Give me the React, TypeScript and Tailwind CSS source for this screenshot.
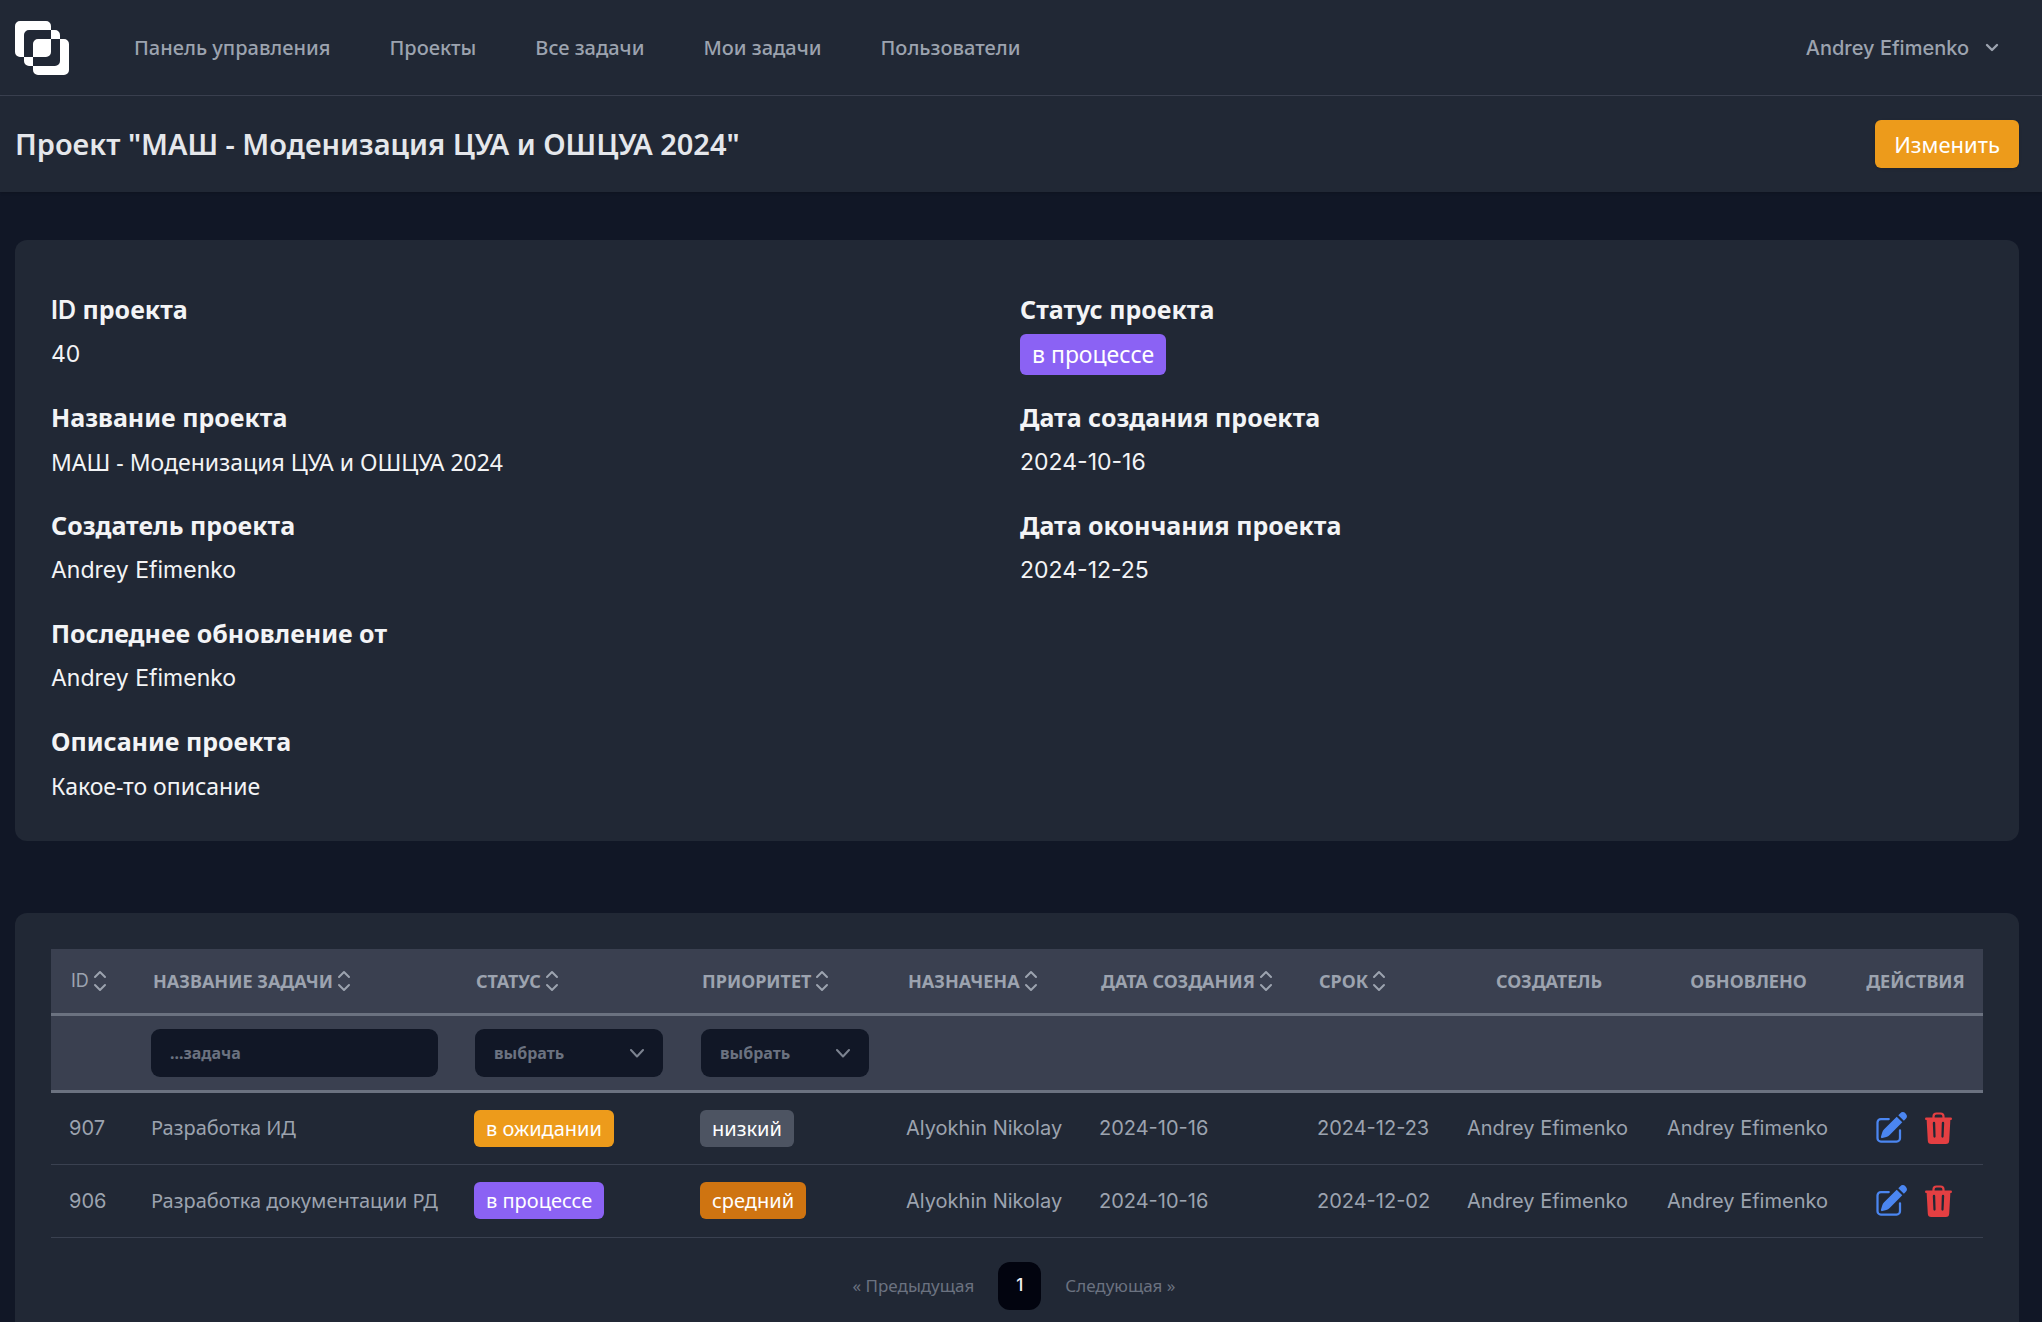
import { HiPencilSquare } from "react-icons/hi2";

const navItems = ["Панель управления", "Проекты", "Все задачи", "Мои задачи", "Пользователи"];

const leftFields = [
  { label: <><span className="font-['Inter'] font-semibold leading-none">ID</span> проекта</>, value: "40", latin: true },
  { label: "Название проекта", value: "МАШ - Моденизация ЦУА и ОШЦУА 2024", latin: false },
  { label: "Создатель проекта", value: "Andrey Efimenko", latin: true },
  { label: "Последнее обновление от", value: "Andrey Efimenko", latin: true },
  { label: "Описание проекта", value: "Какое-то описание", latin: false },
];

const sortable = ["Название задачи", "Статус", "Приоритет", "Назначена", "Дата создания", "Срок"];
const plain = ["Создатель", "Обновлено", "Действия"];

const tasks = [
  {
    id: 907,
    name: "Разработка ИД",
    status: "в ожидании",
    statusColor: "bg-[#ed9b1b]",
    priority: "низкий",
    priorityColor: "bg-[#4d5462]",
    due: "2024-12-23",
  },
  {
    id: 906,
    name: "Разработка документации РД",
    status: "в процессе",
    statusColor: "bg-[#8b62f4]",
    priority: "средний",
    priorityColor: "bg-[#cf7411]",
    due: "2024-12-02",
  },
];

function Logo() {
  return (
    <svg viewBox="0 0 54 54" className="size-[54px]" aria-hidden="true">
      <path
        fill="#fff"
        fillRule="evenodd"
        d="M5 0H31a5 5 0 0 1 5 5V31a5 5 0 0 1-5 5H5a5 5 0 0 1-5-5V5a5 5 0 0 1 5-5Z M14 9H40a5 5 0 0 1 5 5V40a5 5 0 0 1-5 5H14a5 5 0 0 1-5-5V14a5 5 0 0 1 5-5Z M23 18H49a5 5 0 0 1 5 5V49a5 5 0 0 1-5 5H23a5 5 0 0 1-5-5V23a5 5 0 0 1 5-5Z"
      />
    </svg>
  );
}

function SortIcon() {
  return (
    <svg
      viewBox="0 0 14 22"
      className="h-[22px] w-[14px] shrink-0"
      fill="none"
      stroke="currentColor"
      strokeWidth="2"
      strokeLinecap="round"
      strokeLinejoin="round"
      aria-hidden="true"
    >
      <path d="M2 7l5-5 5 5M2 15l5 5 5-5" />
    </svg>
  );
}

function TrashIcon() {
  return (
    <svg viewBox="0 0 27 32" className="h-8 w-[27px]" aria-hidden="true">
      <path d="M8.5 6V4.5a3 3 0 0 1 3-3h4a3 3 0 0 1 3 3V6" fill="none" stroke="currentColor" strokeWidth="2.2" />
      <rect y="5.4" width="27" height="2.6" rx="1.3" fill="currentColor" />
      <path
        fill="currentColor"
        fillRule="evenodd"
        d="M1.6 7H25.4L24.2 28.8A3.4 3.4 0 0 1 20.8 32H6.2A3.4 3.4 0 0 1 2.8 28.8ZM7.8 11L8.4 24.6A1.1 1.1 0 0 0 10.6 24.6L10.2 11A1.2 1.2 0 0 0 7.8 11ZM16.8 11L16.4 24.6A1.1 1.1 0 0 0 18.6 24.6L19.2 11A1.2 1.2 0 0 0 16.8 11Z"
      />
    </svg>
  );
}

function FilterSelect({ label }: { label: string }) {
  return (
    <div className="relative">
      <select
        aria-label={label}
        className="block h-12 w-full appearance-none rounded-[9px] bg-[#111726] pl-[19px] pr-10 text-base font-bold text-[#6b7280]"
      >
        <option>выбрать</option>
      </select>
      <svg
        viewBox="0 0 14 9"
        className="pointer-events-none absolute right-[19px] top-5 h-[9px] w-[14px] text-[#7c8390]"
        fill="none"
        stroke="currentColor"
        strokeWidth="2"
        strokeLinecap="round"
        strokeLinejoin="round"
        aria-hidden="true"
      >
        <path d="M1 1l6 6.5L13 1" />
      </svg>
    </div>
  );
}

export default function App() {
  return (
    <div className="min-h-screen bg-[#111726] font-['Noto_Sans',sans-serif] text-[#f3f4f6]">
      <nav className="flex h-24 items-center border-b border-[#3a4150] bg-[#212835] pl-[15px] pr-[43px]">
        <a href="#" aria-label="Главная">
          <Logo />
        </a>
        <div className="ml-[65px] flex flex-1 gap-[59px] text-xl font-medium text-[#9ca3af]">
          {navItems.map((item) => (
            <a key={item} href="#">
              {item}
            </a>
          ))}
        </div>
        <button className="flex items-center gap-4 font-['Inter'] text-xl font-medium text-[#9ca3af]">
          Andrey Efimenko
          <svg
            viewBox="0 0 14 10"
            className="h-[10px] w-[14px]"
            fill="none"
            stroke="currentColor"
            strokeWidth="2.4"
            strokeLinecap="round"
            strokeLinejoin="round"
            aria-hidden="true"
          >
            <path d="M2 2l5 5 5-5" />
          </svg>
        </button>
      </nav>

      <header className="flex h-24 items-center justify-between bg-[#212835] pl-[15px] pr-[23px] shadow">
        <h1 className="text-[29px] font-semibold text-[#e5e7eb]">Проект "МАШ - Моденизация ЦУА и ОШЦУА 2024"</h1>
        <button className="h-12 rounded-md bg-[#ed9b1b] px-[19px] text-[22px] text-white shadow">Изменить</button>
      </header>

      <main className="pl-[15px] pr-[23px] pt-12">
        <section className="grid grid-cols-2 gap-[6px] rounded-xl bg-[#212835] px-9 pb-[37px] pt-12">
          <dl className="flex flex-col gap-6">
            {leftFields.map((field, i) => (
              <div key={i}>
                <dt className="text-[25px] font-bold leading-[42px]">{field.label}</dt>
                <dd
                  className={
                    field.latin
                      ? "mt-[6px] font-['Inter'] text-[23px] leading-9"
                      : "mt-[6px] text-[23px] leading-9"
                  }
                >
                  {field.value}
                </dd>
              </div>
            ))}
          </dl>
          <dl className="flex flex-col gap-6">
            <div>
              <dt className="text-[25px] font-bold leading-[42px]">Статус проекта</dt>
              <dd className="mt-[6px] flex h-9 items-center">
                <span className="rounded-md bg-[#8b62f4] px-3 text-[23px] leading-[41px] text-white">в процессе</span>
              </dd>
            </div>
            <div>
              <dt className="text-[25px] font-bold leading-[42px]">Дата создания проекта</dt>
              <dd className="mt-[6px] font-['Inter'] text-[23px] leading-9">2024-10-16</dd>
            </div>
            <div>
              <dt className="text-[25px] font-bold leading-[42px]">Дата окончания проекта</dt>
              <dd className="mt-[6px] font-['Inter'] text-[23px] leading-9">2024-12-25</dd>
            </div>
          </dl>
        </section>

        <section className="mt-[72px] rounded-t-xl bg-[#212835] px-9 pb-9 pt-9">
          <table className="w-full table-fixed text-left text-xl text-[#9ca3af]">
            <colgroup>
              <col className="w-[82px]" />
              <col className="w-[323px]" />
              <col className="w-[226px]" />
              <col className="w-[206px]" />
              <col className="w-[193px]" />
              <col className="w-[218px]" />
              <col className="w-[150px]" />
              <col className="w-[200px]" />
              <col className="w-[199px]" />
              <col className="w-[135px]" />
            </colgroup>
            <thead className="bg-[#3a4050] text-lg uppercase">
              <tr className="h-[65px] border-b-[3px] border-[#6b7280]">
                <th className="p-0 pl-5 font-['Inter'] font-normal">
                  <button className="flex items-center gap-1">
                    ID
                    <SortIcon />
                  </button>
                </th>
                {sortable.map((title) => (
                  <th key={title} className="p-0 pl-5">
                    <button className="flex items-center gap-1 whitespace-nowrap font-bold uppercase">
                      {title}
                      <SortIcon />
                    </button>
                  </th>
                ))}
                {plain.map((title) => (
                  <th key={title} className="p-0 text-center font-bold">
                    {title}
                  </th>
                ))}
              </tr>
              <tr className="h-[77px] border-b-[3px] border-[#6b7280] normal-case">
                <td />
                <td className="px-[18px]">
                  <input
                    type="text"
                    aria-label="Название задачи"
                    placeholder="...задача"
                    className="block h-12 w-full rounded-[9px] bg-[#111726] px-[19px] text-base font-bold placeholder:text-[#6b7280]"
                  />
                </td>
                <td className="px-[19px]">
                  <FilterSelect label="Статус" />
                </td>
                <td className="px-[19px]">
                  <FilterSelect label="Приоритет" />
                </td>
                <td colSpan={6} />
              </tr>
            </thead>
            <tbody>
              {tasks.map((task) => (
                <tr key={task.id} className="h-[73px] whitespace-nowrap border-b border-[#3a4150]">
                  <td className="pl-[18px] font-['Inter']">{task.id}</td>
                  <td className="pl-[18px]">{task.name}</td>
                  <td className="pl-[18px]">
                    <span
                      className={`inline-block rounded-md px-3 text-xl/[37px] text-white ${task.statusColor}`}
                    >
                      {task.status}
                    </span>
                  </td>
                  <td className="pl-[18px]">
                    <span
                      className={`inline-block rounded-md px-3 text-xl/[37px] text-white ${task.priorityColor}`}
                    >
                      {task.priority}
                    </span>
                  </td>
                  <td className="pl-[18px] font-['Inter']">Alyokhin Nikolay</td>
                  <td className="pl-[18px] font-['Inter']">2024-10-16</td>
                  <td className="pl-[18px] font-['Inter']">{task.due}</td>
                  <td className="pl-[18px] font-['Inter']">Andrey Efimenko</td>
                  <td className="pl-[18px] font-['Inter']">Andrey Efimenko</td>
                  <td>
                    <div className="flex items-center gap-4 pl-[25px]">
                      <button aria-label="Изменить" className="text-[#4b86f1]">
                        <HiPencilSquare className="size-9" />
                      </button>
                      <button aria-label="Удалить" className="text-[#e43f42]">
                        <TrashIcon />
                      </button>
                    </div>
                  </td>
                </tr>
              ))}
            </tbody>
          </table>
          <nav
            aria-label="Страницы"
            className="mt-6 flex items-center justify-center gap-6 pr-[6px] text-[17px] text-[#6b7280]"
          >
            <a href="#">« Предыдущая</a>
            <a
              href="#"
              aria-current="page"
              className="flex h-12 w-[43px] items-center justify-center rounded-xl bg-[#02040f] font-['Inter'] font-medium text-[#f3f4f6]"
            >
              1
            </a>
            <a href="#">Следующая »</a>
          </nav>
        </section>
      </main>
    </div>
  );
}
